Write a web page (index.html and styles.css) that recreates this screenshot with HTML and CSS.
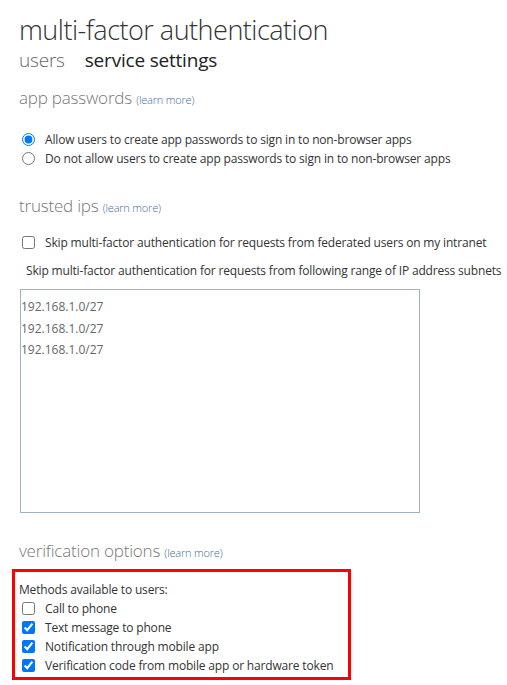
FILE: index.html
```html
<!DOCTYPE html>
<html>
<head>
<meta charset="utf-8">
<link rel="stylesheet" href="styles.css">
</head>
<body>
<div class="page">
  <h1 class="title">multi-factor authentication</h1>
  <div class="tabs">
    <span class="tab">users</span>
    <span class="tab active">service settings</span>
  </div>

  <h2 class="section">app passwords <a class="learn">(learn more)</a></h2>
  <div class="options">
    <label class="opt"><input type="radio" name="ap" checked> Allow users to create app passwords to sign in to non-browser apps</label>
    <label class="opt"><input type="radio" name="ap"> Do not allow users to create app passwords to sign in to non-browser apps</label>
  </div>

  <h2 class="section sec2">trusted ips <a class="learn">(learn more)</a></h2>
  <label class="opt fed"><input type="checkbox"> Skip multi-factor authentication for requests from federated users on my intranet</label>
  <div class="subnets-label">Skip multi-factor authentication for requests from following range of IP address subnets</div>
  <div class="ipbox">
    <div>192.168.1.0/27</div>
    <div>192.168.1.0/27</div>
    <div>192.168.1.0/27</div>
  </div>

  <h2 class="section sec3">verification options <a class="learn">(learn more)</a></h2>
  <div class="methods">
    <div class="methods-title">Methods available to users:</div>
    <label class="opt m"><input type="checkbox"> Call to phone</label>
    <label class="opt m"><input type="checkbox" checked> Text message to phone</label>
    <label class="opt m"><input type="checkbox" checked> Notification through mobile app</label>
    <label class="opt m"><input type="checkbox" checked> Verification code from mobile app or hardware token</label>
  </div>
</div>
</body>
</html>
```
FILE: styles.css
```css
html, body {
  margin: 0;
  padding: 0;
  background: #fff;
}
body {
  font-family: "Open Sans", "Noto Sans", sans-serif;
  color: #444;
}
.page {
  padding: 13px 0 0 19px;
}
.title {
  margin: 0;
  font-size: 27px;
  font-weight: 300;
  line-height: 34px;
  color: #333;
  letter-spacing: -0.5px;
}
.tabs {
  display: flex;
  gap: 20px;
  font-size: 19px;
  line-height: 24px;
  margin-top: 1px;
  letter-spacing: -0.2px;
}
.tab {
  color: #666;
  font-weight: 300;
}
.tab.active {
  color: #222;
  font-weight: 400;
}
.section {
  margin: 14px 0 0 0;
  font-size: 17px;
  font-weight: 300;
  line-height: 24px;
  color: #777;
  letter-spacing: -0.2px;
}
.learn {
  font-size: 11px;
  color: #3f6e9a;
  letter-spacing: -0.2px;
}
.options {
  margin-top: 18px;
  display: flex;
  flex-direction: column;
}
.opt {
  display: flex;
  align-items: center;
  font-size: 12px;
  line-height: 19px;
  color: #333;
  letter-spacing: -0.17px;
}
.opt input {
  margin: 0 10px 0 3px;
  width: 13px;
  height: 13px;
}
.sec2 {
  margin-top: 26px;
}
.fed {
  margin-top: 13px;
}
.subnets-label {
  font-size: 12px;
  line-height: 19px;
  color: #333;
  margin: 9px 0 0 7px;
  letter-spacing: -0.17px;
  white-space: nowrap;
}
.ipbox {
  margin: 9px 0 0 1px;
  width: 400px;
  height: 224px;
  border: 1px solid #9db3c9;
  font-size: 12px;
  line-height: 21.5px;
  color: #666;
  padding-top: 6px;
  box-sizing: border-box;
}
.sec3 {
  margin-top: 26px;
}
.methods {
  margin: 4px 0 0 -7px;
  width: 339px;
  border: 3px solid #f00;
  box-sizing: border-box;
  padding: 8px 0 2px 4px;
}
.methods-title {
  font-size: 12px;
  line-height: 19px;
  color: #333;
  letter-spacing: -0.17px;
}
.m input {
  margin-left: 3px;
}
```
